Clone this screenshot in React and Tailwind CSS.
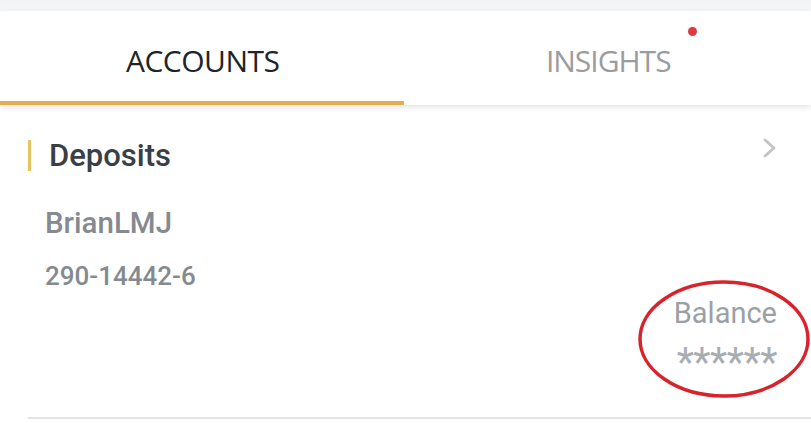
import React from "react";

export default function App() {
  return (
    <div className="relative w-[811px] h-[423px] overflow-hidden bg-white" style={{ fontFamily: "Roboto, 'Noto Sans', sans-serif" }}>
      <div className="h-[11px] bg-gradient-to-b from-[#f1f2f4] to-[#f7f8f9]" />
      <div className="relative z-10 flex h-[94px] bg-white shadow-[0_2px_6px_rgba(0,0,0,0.12)]">
        <div className="relative flex w-1/2 items-center justify-center pt-[6px]">
          <span className="text-[30px] leading-none text-[#1f2329] tracking-[-0.5px]" style={{ fontFamily: "'Open Sans', sans-serif" }}>ACCOUNTS</span>
          <div className="absolute bottom-0 left-0 h-[4px] w-[404px] bg-[#e3ad4f]" />
        </div>
        <div className="relative flex w-1/2 items-center justify-center pt-[6px]">
          <span className="relative text-[30px] leading-none text-[#9a9c9e] tracking-[-1px]" style={{ fontFamily: "'Open Sans', sans-serif" }}>
            INSIGHTS
            <span className="absolute -right-[26px] -top-[19px] h-[9px] w-[9px] rounded-full bg-[#e0393e]" />
          </span>
        </div>
      </div>

      <div className="pl-[28px]">
        <div className="flex items-center justify-between pt-[35px] pr-[33px]">
          <div className="flex items-center">
            <div className="h-[31px] w-[3px] bg-[#e8c25a]" />
            <span className="ml-[18px] text-[31px] font-medium leading-none text-[#3a3f46]">Deposits</span>
          </div>
          <svg width="16" height="22" viewBox="0 0 16 22" className="-mt-[16px]">
            <path d="M3 3 L12 11 L3 19" fill="none" stroke="#c4c4c4" strokeWidth="3" strokeLinecap="round" strokeLinejoin="round" />
          </svg>
        </div>
        <div className="pl-[17px] pt-[38px] text-[29.5px] font-medium leading-none text-[#858a90]">BrianLMJ</div>
        <div className="pl-[17px] pt-[24px] text-[26px] font-medium leading-none text-[#858a90]">290-14442-6</div>
        <div className="flex flex-col items-end pr-[34px] pt-[10px]">
          <div className="text-[29px] leading-none text-[#9ba0a5]">Balance</div>
          <div className="mt-[15px] text-[40px] leading-none text-[#a8adb2] tracking-[-0.5px]">******</div>
        </div>
        <div className="mt-[34px] h-[2px] bg-[#e4e4e4]" />
      </div>

      <svg className="pointer-events-none absolute left-[637px] top-[279px]" width="174" height="122" viewBox="0 0 174 122">
        <ellipse cx="87" cy="60" rx="84" ry="57" fill="none" stroke="#d8232c" strokeWidth="3.5" />
      </svg>
    </div>
  );
}
